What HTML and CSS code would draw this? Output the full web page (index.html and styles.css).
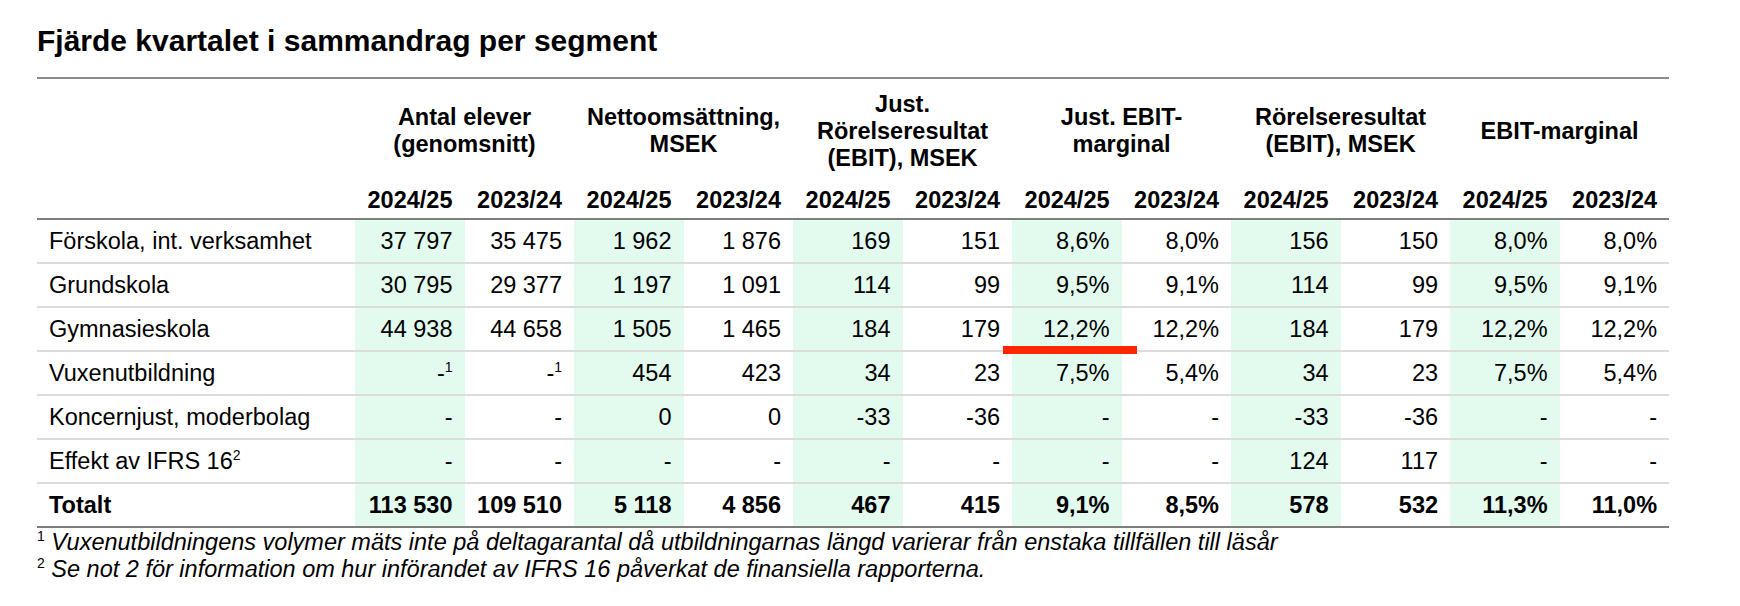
FILE: index.html
```html
<!DOCTYPE html>
<html lang="sv">
<head>
<meta charset="utf-8">
<title>Fjärde kvartalet i sammandrag per segment</title>
<link rel="stylesheet" href="styles.css">
</head>
<body>
<div class="page">
  <h1 class="title">Fjärde kvartalet i sammandrag per segment</h1>
  <table class="seg">
    <colgroup>
      <col class="c-label">
      <col class="c-num"><col class="c-num"><col class="c-num"><col class="c-num">
      <col class="c-num"><col class="c-num"><col class="c-num"><col class="c-num">
      <col class="c-num"><col class="c-num"><col class="c-num"><col class="c-num">
    </colgroup>
    <thead>
      <tr class="groups">
        <th class="blank"></th>
        <th colspan="2">Antal elever<br>(genomsnitt)</th>
        <th colspan="2">Nettoomsättning,<br>MSEK</th>
        <th colspan="2">Just.<br>Rörelseresultat<br>(EBIT), MSEK</th>
        <th colspan="2">Just. EBIT-<br>marginal</th>
        <th colspan="2">Rörelseresultat<br>(EBIT), MSEK</th>
        <th colspan="2">EBIT-marginal</th>
      </tr>
      <tr class="years">
        <th class="blank"></th>
        <th>2024/25</th><th>2023/24</th>
        <th>2024/25</th><th>2023/24</th>
        <th>2024/25</th><th>2023/24</th>
        <th>2024/25</th><th>2023/24</th>
        <th>2024/25</th><th>2023/24</th>
        <th>2024/25</th><th>2023/24</th>
      </tr>
    </thead>
    <tbody>
      <tr>
        <td class="label">Förskola, int. verksamhet</td>
        <td class="hl">37 797</td><td>35 475</td>
        <td class="hl">1 962</td><td>1 876</td>
        <td class="hl">169</td><td>151</td>
        <td class="hl">8,6%</td><td>8,0%</td>
        <td class="hl">156</td><td>150</td>
        <td class="hl">8,0%</td><td>8,0%</td>
      </tr>
      <tr>
        <td class="label">Grundskola</td>
        <td class="hl">30 795</td><td>29 377</td>
        <td class="hl">1 197</td><td>1 091</td>
        <td class="hl">114</td><td>99</td>
        <td class="hl">9,5%</td><td>9,1%</td>
        <td class="hl">114</td><td>99</td>
        <td class="hl">9,5%</td><td>9,1%</td>
      </tr>
      <tr>
        <td class="label">Gymnasieskola</td>
        <td class="hl">44 938</td><td>44 658</td>
        <td class="hl">1 505</td><td>1 465</td>
        <td class="hl">184</td><td>179</td>
        <td class="hl">12,2%</td><td>12,2%</td>
        <td class="hl">184</td><td>179</td>
        <td class="hl">12,2%</td><td>12,2%</td>
      </tr>
      <tr>
        <td class="label">Vuxenutbildning</td>
        <td class="hl">-<sup>1</sup></td><td>-<sup>1</sup></td>
        <td class="hl">454</td><td>423</td>
        <td class="hl">34</td><td>23</td>
        <td class="hl">7,5%</td><td>5,4%</td>
        <td class="hl">34</td><td>23</td>
        <td class="hl">7,5%</td><td>5,4%</td>
      </tr>
      <tr>
        <td class="label">Koncernjust, moderbolag</td>
        <td class="hl">-</td><td>-</td>
        <td class="hl">0</td><td>0</td>
        <td class="hl">-33</td><td>-36</td>
        <td class="hl">-</td><td>-</td>
        <td class="hl">-33</td><td>-36</td>
        <td class="hl">-</td><td>-</td>
      </tr>
      <tr>
        <td class="label">Effekt av IFRS 16<sup>2</sup></td>
        <td class="hl">-</td><td>-</td>
        <td class="hl">-</td><td>-</td>
        <td class="hl">-</td><td>-</td>
        <td class="hl">-</td><td>-</td>
        <td class="hl">124</td><td>117</td>
        <td class="hl">-</td><td>-</td>
      </tr>
      <tr class="total">
        <td class="label">Totalt</td>
        <td class="hl">113 530</td><td>109 510</td>
        <td class="hl">5 118</td><td>4 856</td>
        <td class="hl">467</td><td>415</td>
        <td class="hl">9,1%</td><td>8,5%</td>
        <td class="hl">578</td><td>532</td>
        <td class="hl">11,3%</td><td>11,0%</td>
      </tr>
    </tbody>
  </table>
  <div class="notes">
    <p><sup>1</sup> Vuxenutbildningens volymer mäts inte på deltagarantal då utbildningarnas längd varierar från enstaka tillfällen till läsår</p>
    <p><sup>2</sup> Se not 2 för information om hur införandet av IFRS 16 påverkat de finansiella rapporterna.</p>
  </div>
  <div class="marker"></div>
</div>
</body>
</html>
```

FILE: styles.css
```css
* {
  box-sizing: border-box;
}

html, body {
  margin: 0;
  padding: 0;
  background: #ffffff;
}

body {
  font-family: "Liberation Sans", Arial, Helvetica, sans-serif;
  color: #000000;
}

.page {
  position: relative;
  width: 1740px;
  height: 606px;
  padding: 23px 0 0 37px;
}

.title {
  margin: 0;
  font-size: 30px;
  line-height: 36px;
  font-weight: 700;
  letter-spacing: 0;
}

.seg {
  margin-top: 18px;
  width: 1632px;
  table-layout: fixed;
  border-collapse: separate;
  border-spacing: 0;
  font-size: 23.5px;
}

.c-label {
  width: 318px;
}

.c-num {
  width: 109.5px;
}

.seg th,
.seg td {
  padding: 0 12px 0 0;
  white-space: nowrap;
}

.groups th {
  border-top: 2px solid #8a8a8a;
  height: 106px;
  text-align: center;
  vertical-align: middle;
  padding: 0;
  font-weight: 700;
  line-height: 27px;
}

.years th {
  height: 37px;
  border-bottom: 2px solid #7d7d7d;
  text-align: right;
  vertical-align: middle;
  font-weight: 700;
  line-height: 26px;
  padding-top: 0;
  padding-bottom: 2px;
}

.seg td {
  text-align: right;
  line-height: 42px;
  height: 44px;
  border-bottom: 2px solid #dcdcdc;
  font-weight: 400;
}

.seg td.label {
  text-align: left;
  padding-left: 12px;
}

.seg td.hl {
  background: #e3faee;
}

.seg tr.total td {
  font-weight: 700;
  border-bottom-color: #7d7d7d;
}

.seg sup,
.notes sup {
  font-size: 14px;
  line-height: 0;
  vertical-align: 9px;
}

.notes {
  font-size: 23.5px;
  font-style: italic;
  line-height: 27px;
  padding-top: 1px;
}

.notes p {
  margin: 0;
}

.notes sup {
  font-style: normal;
}

.marker {
  position: absolute;
  left: 1003px;
  top: 346px;
  width: 134px;
  height: 8px;
  background: #ff2600;
}
```
